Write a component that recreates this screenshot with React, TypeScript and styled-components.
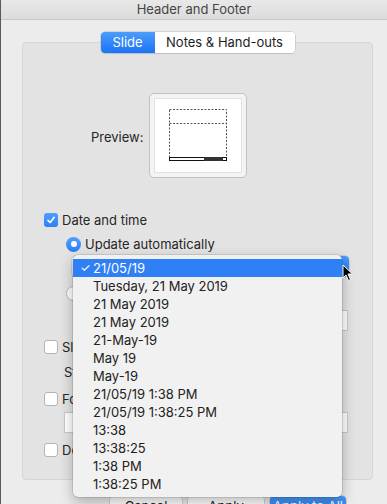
import React from "react";
import styled, { createGlobalStyle } from "styled-components";

const GlobalStyle = createGlobalStyle`
  html, body {
    margin: 0;
    padding: 0;
    background: #ececec;
  }
  body {
    font-family: Inter, "Noto Sans", "Liberation Sans", sans-serif;
    font-size: 13px;
    color: #262626;
  }
`;

const formats = [
  "Tuesday, 21 May 2019",
  "21 May 2019",
  "21 May 2019",
  "21-May-19",
  "May 19",
  "May-19",
  "21/05/19 1:38 PM",
  "21/05/19 1:38:25 PM",
  "13:38",
  "13:38:25",
  "1:38 PM",
  "1:38:25 PM",
];

const Window = styled.div`
  position: relative;
  width: 387px;
  height: 504px;
  overflow: hidden;
  background: #ececec;
  border-left: 1px solid #5a5a5a;
  box-sizing: border-box;
`;

const TitleBar = styled.div`
  height: 19px;
  line-height: 19px;
  text-align: center;
  background: linear-gradient(#e8e8e8, #dcdcdc);
  border-bottom: 1px solid #c9c9c9;
  color: #454545;
  font-size: 13px;
`;

const Body = styled.div`
  display: flex;
  flex-direction: column;
  padding: 0 14px 0 21px;
`;

const Segmented = styled.div`
  display: flex;
  align-self: center;
  margin: 12px 0 -11px 0;
  position: relative;
  z-index: 1;
  border-radius: 4px;
  box-shadow: 0 0 0 0.5px #b8b8b8, 0 1px 1px rgba(0, 0, 0, 0.12);
  background: #fff;
`;

const Segment = styled.div<{ $active?: boolean; $w: number }>`
  width: ${(p) => p.$w}px;
  height: 21px;
  line-height: 21px;
  text-align: center;
  font-size: 13px;
  border-radius: ${(p) => (p.$active ? "4px 0 0 4px" : "0 4px 4px 0")};
  color: ${(p) => (p.$active ? "#fff" : "#1e1e1e")};
  background: ${(p) =>
    p.$active ? "linear-gradient(#4b9cfb, #1b74f5)" : "#fff"};
`;

const Panel = styled.div`
  display: flex;
  flex-direction: column;
  height: 438px;
  box-sizing: border-box;
  padding: 50px 0 0 21px;
  background: #e3e3e3;
  border: 1px solid #d6d6d6;
  border-radius: 4px;
`;

const PreviewRow = styled.div`
  display: grid;
  grid-template-columns: 1fr auto 1fr;
  align-items: center;
  margin-left: -21px;
`;

const PreviewLabel = styled.div`
  justify-self: end;
  margin-right: 5px;
  padding-top: 2px;
`;

const PreviewFrame = styled.div`
  width: 98px;
  height: 85px;
  box-sizing: border-box;
  border: 1px solid #c2c2c2;
  border-radius: 5px;
  background: #f4f4f4;
  padding: 4px;
  display: flex;
`;

const PreviewInner = styled.div`
  flex: 1;
  background: #fff;
  border: 1px solid #e2e2e2;
  display: flex;
  align-items: center;
  justify-content: center;
`;

const Row = styled.div<{ $mt: number; $indent?: number }>`
  display: flex;
  align-items: center;
  height: 18px;
  margin-top: ${(p) => p.$mt}px;
  margin-left: ${(p) => p.$indent ?? 0}px;
  gap: 4px;
  white-space: nowrap;
`;

const Check = styled.div<{ $on?: boolean }>`
  width: 14px;
  height: 14px;
  box-sizing: border-box;
  border-radius: 3px;
  flex: none;
  display: flex;
  align-items: center;
  justify-content: center;
  background: ${(p) => (p.$on ? "linear-gradient(#4f9ffb, #2a80f6)" : "#fff")};
  border: ${(p) => (p.$on ? "none" : "1px solid #b4b4b4")};
`;

const Radio = styled.div<{ $on?: boolean }>`
  width: 15px;
  height: 15px;
  box-sizing: border-box;
  border-radius: 50%;
  flex: none;
  display: flex;
  align-items: center;
  justify-content: center;
  background: ${(p) => (p.$on ? "linear-gradient(#4f9ffb, #2a80f6)" : "#fff")};
  border: ${(p) => (p.$on ? "none" : "1px solid #b4b4b4")};
  &::after {
    content: "";
    width: 6px;
    height: 6px;
    border-radius: 50%;
    background: ${(p) => (p.$on ? "#fff" : "transparent")};
  }
`;

const PopupButton = styled.div<{ $mt: number }>`
  margin: ${(p) => p.$mt}px 0 0 28px;
  width: 277px;
  height: 21px;
  display: flex;
  border-radius: 4px;
  background: #fff;
  box-shadow: 0 0 0 0.5px #b8b8b8;
  overflow: hidden;
  &::after {
    content: "";
    margin-left: auto;
    width: 18px;
    background: linear-gradient(#4b9cfb, #1b74f5);
  }
`;

const TextField = styled.div<{ $mt: number; $left: number; $w: number }>`
  margin: ${(p) => p.$mt}px 0 0 ${(p) => p.$left}px;
  width: ${(p) => p.$w}px;
  height: 21px;
  box-sizing: border-box;
  background: #fff;
  border: 1px solid #c8c8c8;
`;

const Buttons = styled.div`
  display: flex;
  gap: 6px;
  margin: 16px 0 0 88px;
`;

const Button = styled.div<{ $primary?: boolean; $w: number }>`
  width: ${(p) => p.$w}px;
  height: 21px;
  line-height: 21px;
  text-align: center;
  border-radius: 4px;
  color: ${(p) => (p.$primary ? "#fff" : "#222")};
  background: ${(p) =>
    p.$primary ? "linear-gradient(#4b9cfb, #1b74f5)" : "#fff"};
  box-shadow: 0 0 0 0.5px #b8b8b8, 0 1px 1px rgba(0, 0, 0, 0.1);
`;

const Menu = styled.div`
  position: absolute;
  left: 72px;
  top: 255px;
  width: 269px;
  box-sizing: border-box;
  padding: 4px 0 4px;
  background: #f1f1f1;
  border-radius: 5px;
  box-shadow: 0 0 0 0.5px rgba(0, 0, 0, 0.2), 0 5px 14px rgba(0, 0, 0, 0.28);
  font-size: 13px;
`;

const MenuItem = styled.div<{ $selected?: boolean }>`
  position: relative;
  height: 18px;
  line-height: 18px;
  padding-left: 20px;
  color: ${(p) => (p.$selected ? "#fff" : "#222")};
  background: ${(p) => (p.$selected ? "#2f80f5" : "transparent")};
`;

const Tick = styled.span`
  position: absolute;
  left: 7px;
  font-size: 12px;
`;

const Cursor = styled.svg`
  position: absolute;
  left: 341px;
  top: 264px;
`;

function SlideThumb() {
  return (
    <svg width="60" height="56" viewBox="0 0 60 56">
      <rect x="1.5" y="1.5" width="57" height="51" fill="none" stroke="#555" strokeWidth="1" strokeDasharray="2 1.5" />
      <line x1="1.5" y1="15.5" x2="58.5" y2="15.5" stroke="#555" strokeWidth="1" strokeDasharray="2 1.5" />
      <rect x="1.5" y="49.5" width="57" height="3" fill="#fff" stroke="#111" strokeWidth="1" />
      <rect x="36" y="49" width="19" height="4" rx="1" fill="#333" />
    </svg>
  );
}

function CheckMark() {
  return (
    <svg width="10" height="10" viewBox="0 0 10 10">
      <path d="M2 5.3 L4.2 7.5 L8.2 2.3" fill="none" stroke="#fff" strokeWidth="1.7" strokeLinecap="round" strokeLinejoin="round" />
    </svg>
  );
}

export default function App() {
  return (
    <>
      <GlobalStyle />
      <Window>
        <TitleBar>Header and Footer</TitleBar>
        <Body>
          <Segmented>
            <Segment $active $w={54}>Slide</Segment>
            <Segment $w={140}>Notes &amp; Hand-outs</Segment>
          </Segmented>
          <Panel>
            <PreviewRow>
              <PreviewLabel>Preview:</PreviewLabel>
              <PreviewFrame>
                <PreviewInner>
                  <SlideThumb />
                </PreviewInner>
              </PreviewFrame>
            </PreviewRow>
            <Row $mt={33}>
              <Check $on>
                <CheckMark />
              </Check>
              Date and time
            </Row>
            <Row $mt={6} $indent={22}>
              <Radio $on />
              Update automatically
            </Row>
            <PopupButton $mt={3} />
            <Row $mt={7} $indent={22}>
              <Radio />
              Fixed
            </Row>
            <TextField $mt={8} $left={40} $w={264} />
            <Row $mt={7}>
              <Check />
              Slide number
            </Row>
            <Row $mt={7} $indent={20}>
              Start at:
            </Row>
            <Row $mt={9}>
              <Check />
              Footer
            </Row>
            <TextField $mt={4} $left={20} $w={284} />
            <Row $mt={8}>
              <Check />
              Don&apos;t show on title slide
            </Row>
          </Panel>
          <Buttons>
            <Button $w={72}>Cancel</Button>
            <Button $w={76}>Apply</Button>
            <Button $primary $w={76}>Apply to All</Button>
          </Buttons>
        </Body>
        <Menu>
          <MenuItem $selected>
            <Tick>✓</Tick>21/05/19
          </MenuItem>
          {formats.map((f, i) => (
            <MenuItem key={i}>{f}</MenuItem>
          ))}
        </Menu>
        <Cursor width="12" height="18" viewBox="0 0 12 18">
          <path d="M1 1 L1 14 L4 11 L6.5 16.5 L8.5 15.5 L6 10 L10.5 10 Z" fill="#000" stroke="#fff" strokeWidth="1" strokeLinejoin="round" />
        </Cursor>
      </Window>
    </>
  );
}
